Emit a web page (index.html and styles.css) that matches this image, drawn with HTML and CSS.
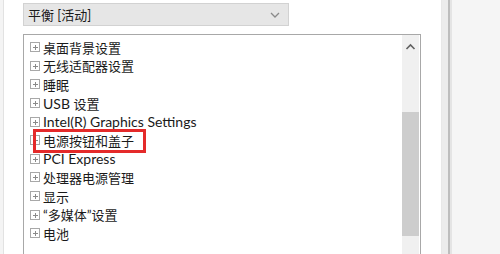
FILE: index.html
```html
<!DOCTYPE html>
<html lang="zh-CN">
<head>
    <meta charset="UTF-8">
    <title>电源选项 - 高级设置</title>
    <link rel="stylesheet" href="styles.css">
</head>
<body>
    <div class="window">
        <div class="edge"></div>
        <div class="content">
            <div class="select">
                <span>平衡 [活动]</span>
                <svg class="chevron" width="10" height="6" viewBox="0 0 10 6"><path d="M1 1 L5 5 L9 1" fill="none" stroke="#8a8a8a" stroke-width="1.3"/></svg>
            </div>
            <div class="listbox">
                <ul class="tree">
                    <li><i class="plus"></i>桌面背景设置</li>
                    <li><i class="plus"></i>无线适配器设置</li>
                    <li><i class="plus"></i>睡眠</li>
                    <li><i class="plus"></i><span class="latin">USB&nbsp;</span>设置</li>
                    <li><i class="plus"></i><span class="latin">Intel(R) Graphics Settings</span></li>
                    <li class="marked"><i class="plus"></i>电源按钮和盖子</li>
                    <li><i class="plus"></i><span class="latin">PCI Express</span></li>
                    <li><i class="plus"></i>处理器电源管理</li>
                    <li><i class="plus"></i>显示</li>
                    <li><i class="plus"></i>“多媒体”设置</li>
                    <li><i class="plus"></i>电池</li>
                </ul>
                <div class="scrollbar">
                    <svg class="arrow" width="17" height="17" viewBox="0 0 17 17"><path d="M4.5 10 L8.5 6 L12.5 10" fill="none" stroke="#606060" stroke-width="1.6"/></svg>
                    <div class="track"><div class="thumb"></div></div>
                    <svg class="arrow" width="17" height="17" viewBox="0 0 17 17"><path d="M4.5 7 L8.5 11 L12.5 7" fill="none" stroke="#606060" stroke-width="1.6"/></svg>
                </div>
            </div>
        </div>
        <div class="side"></div>
    </div>
</body>
</html>
```

FILE: styles.css
```css
body {
    margin: 0;
    background-color: #ffffff;
    font-family: Lato, "Noto Sans CJK SC", sans-serif;
    color: #1a1a1a;
}
.window {
    display: flex;
    width: 500px;
    height: 254px;
    overflow: hidden;
}
.edge {
    width: 3px;
    flex: none;
    background-color: #f4f4f4;
    border-right: 1px solid #e2e2e2;
}
.content {
    width: 418px;
    flex: none;
    padding: 3px 0 0 19px;
}
.select {
    width: 266px;
    height: 23px;
    display: flex;
    align-items: center;
    justify-content: space-between;
    padding: 0 8px 0 4px;
    box-sizing: border-box;
    background-color: #e6e6e6;
    border: 1px solid #d2d2d2;
    font-size: 13px;
}
.select span {
    line-height: 20px;
}
.listbox {
    display: flex;
    margin-top: 8px;
    width: 398px;
    height: 240px;
    box-sizing: border-box;
    border: 1px solid #a8a8a8;
    border-bottom: none;
}
.tree {
    flex: 1;
    list-style: none;
    margin: 0;
    padding: 3px 0 0 6px;
}
.tree li {
    display: flex;
    align-items: center;
    height: 18.6px;
    font-size: 13px;
    white-space: nowrap;
}
.latin {
    font-size: 14px;
}
.plus {
    position: relative;
    width: 8px;
    height: 8px;
    margin-right: 3px;
    border: 1px solid #a8a8a8;
    flex: none;
}
.plus::before,
.plus::after {
    content: "";
    position: absolute;
    background-color: #8a8a8a;
}
.plus::before {
    left: 2px;
    top: 4px;
    width: 5px;
    height: 1px;
}
.plus::after {
    left: 4px;
    top: 2px;
    width: 1px;
    height: 5px;
}
.marked {
    position: relative;
}
.marked::after {
    content: "";
    position: absolute;
    left: 3px;
    top: -2px;
    width: 107px;
    height: 18px;
    border: 3px solid #e42a2a;
}
.scrollbar {
    width: 17px;
    flex: none;
    margin-right: 1px;
    display: flex;
    flex-direction: column;
    background-color: #f0f0f0;
}
.arrow {
    flex: none;
    margin-top: 4px;
}
.track {
    flex: 1;
    padding-top: 56px;
}
.thumb {
    height: 124px;
    background-color: #cdcdcd;
}
.side {
    flex: 1;
    background-color: #f5f5f5;
    border-left: 1px solid #e8e8e8;
    box-shadow: inset 6px 0 0 #ececec, inset 8px 0 0 #bdbdbd, inset 10px 0 0 #e4e4e4;
}
```
